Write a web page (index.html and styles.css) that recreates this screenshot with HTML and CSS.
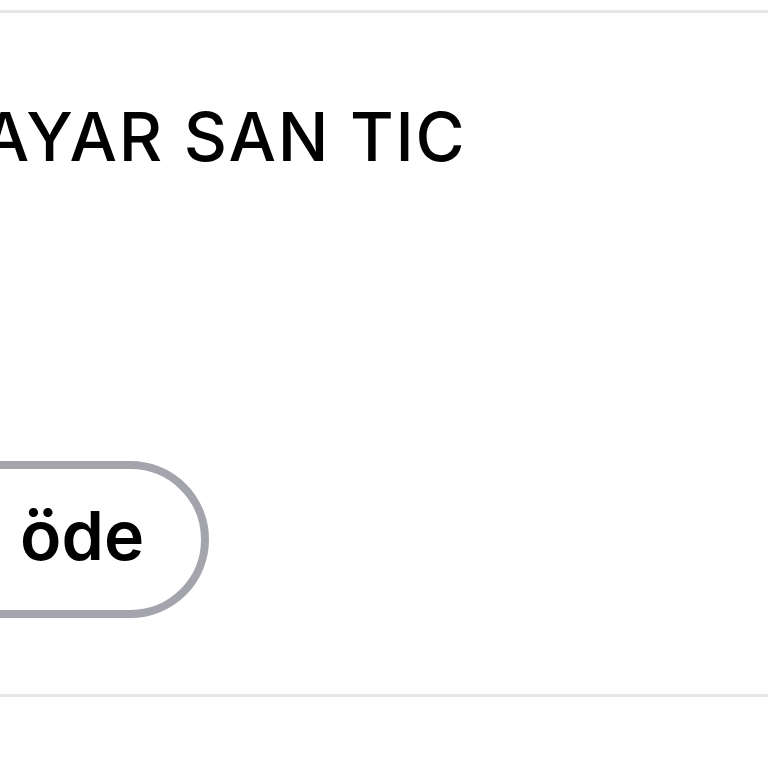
FILE: index.html
```
<!DOCTYPE html>
<html lang="tr">
<head>
<meta charset="utf-8">
<link rel="stylesheet" href="styles.css">
</head>
<body>
<div class="card">
  <div class="inner">
    <h1 class="title">KAYAR SAN TIC</h1>
    <button class="pay">Hemen öde</button>
  </div>
</div>
</body>
</html>
```
FILE: styles.css
```
html, body {
  margin: 0;
  padding: 0;
  background: #ffffff;
  overflow: hidden;
  width: 768px;
  height: 768px;
}
.card {
  margin-top: 10px;
  height: 687px;
  border-top: 3px solid #e6e6e8;
  border-bottom: 3px solid #e6e6e8;
  box-sizing: border-box;
}
.inner {
  padding-top: 84px;
  display: flex;
  flex-direction: column;
  align-items: flex-start;
  font-family: Inter, "Noto Sans", sans-serif;
  color: #000;
}
.title {
  margin: 0 0 0 -66px;
  font-size: 67px;
  font-weight: 550;
  line-height: 80px;
  letter-spacing: 1.8px;
  white-space: nowrap;
}
.pay {
  margin: 284px 0 0 -299px;
  height: 157px;
  padding: 0 57px 10px 60px;
  border: 8px solid #a4a4ac;
  border-radius: 80px;
  background: #fff;
  font-family: Inter, "Noto Sans", sans-serif;
  font-size: 68px;
  font-weight: 600;
  color: #000;
  white-space: nowrap;
}
```
